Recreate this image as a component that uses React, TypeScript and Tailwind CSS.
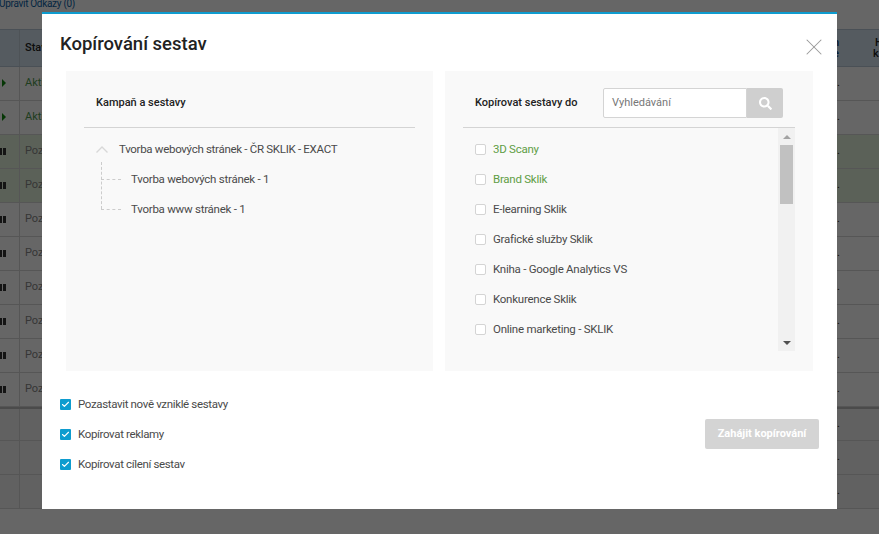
import React from 'react';
import { Check, X } from 'lucide-react';
import { FaSearch } from 'react-icons/fa';

const targets = [
    { name: '3D Scany', active: true },
    { name: 'Brand Sklik', active: true },
    { name: 'E-learning Sklik' },
    { name: 'Grafické služby Sklik' },
    { name: 'Kniha - Google Analytics VS' },
    { name: 'Konkurence Sklik' },
    { name: 'Online marketing - SKLIK' },
];

const rows = [
    { state: 'Aktivní', on: true },
    { state: 'Aktivní', on: true },
    { state: 'Pozastaveno', green: true },
    { state: 'Pozastaveno', green: true },
    { state: 'Pozastaveno' },
    { state: 'Pozastaveno' },
    { state: 'Pozastaveno' },
    { state: 'Pozastaveno' },
    { state: 'Pozastaveno' },
    { state: 'Pozastaveno' },
];

const options = ['Pozastavit nově vzniklé sestavy', 'Kopírovat reklamy', 'Kopírovat cílení sestav'];

function Background() {
    return (
        <div className="text-[11px] text-[#222]">
            <div className="h-[29px] overflow-hidden">
                <div className="-mt-[4px] -ml-px text-[10px] tracking-[-0.3px] leading-[16px] text-[#0b5fa5]">Upravit Odkazy (0)</div>
            </div>
            <div className="flex h-[38px] bg-[#d4e3f0] border-y border-[#b8c8d6]">
                <div className="w-5 border-r border-[#c4d0da]" />
                <div className="pl-[5px] flex items-center font-medium flex-1">Stav</div>
                <div className="w-[40px] flex flex-col justify-center leading-[11px] font-medium text-[#0b3f75]">
                    <div>n</div>
                    <div>e</div>
                </div>
                <div className="w-[6px] flex flex-col justify-center items-start leading-[11px] font-medium">
                    <div className="ml-[2px]">H</div>
                    <div>k</div>
                </div>
            </div>
            {rows.map((row, i) => (
                <div key={i} className={`flex h-[34px] border-b border-[#d6d6d6] ${row.green ? 'bg-[#e3f2dc]' : 'bg-white'}`}>
                    <div className="w-5 border-r border-[#d6d6d6] flex items-center">
                        {row.on ? (
                            <div className="ml-[2px] -mt-[2px] border-y-[4px] border-l-[4px] border-y-transparent border-l-[#108a10]" />
                        ) : (
                            <div className="flex gap-px">
                                <div className="w-[2px] h-[7px] bg-[#333]" />
                                <div className="w-[3px] h-[7px] bg-[#333]" />
                            </div>
                        )}
                    </div>
                    <div className={`pl-[5px] flex items-center flex-1 ${row.on ? 'text-[#4f9a4f]' : 'text-[#888]'}`}>{row.state}</div>
                    <div className="w-[42px] flex items-center">.</div>
                </div>
            ))}
            <div className="h-[2px] bg-[#bbb]" />
            {[32, 34, 34].map((height, i) => (
                <div key={i} className={`flex bg-[#f2f2f2] border-b border-[#d6d6d6] ${height === 32 ? 'h-[32px]' : 'h-[34px]'}`}>
                    <div className="w-5 border-r border-[#d6d6d6]" />
                    <div className="flex-1" />
                    <div className="w-[42px] flex items-center">.</div>
                </div>
            ))}
        </div>
    );
}

export default function App() {
    return (
        <div className="relative h-[534px] w-[879px] overflow-hidden bg-white font-['Roboto',sans-serif]">
            <Background />
            <div className="absolute inset-0 bg-black/60" />

            <div className="absolute left-[42px] top-[12px] w-[795px] h-[497px] bg-white border-t-2 border-[#0e9ccf] flex flex-col">
                <div className="h-[57px] px-[18px] flex justify-between relative">
                    <h1 className="mt-[18px] text-[18.5px] leading-[24px] font-medium text-[#222]">Kopírování sestav</h1>
                    <X className="absolute right-[9px] top-[19px] w-[28px] h-[28px] text-[#999]" strokeWidth={0.9} />
                </div>

                <div className="flex gap-3 pl-[24px] pr-[24px]">
                    <div className="w-[367px] h-[300px] bg-[#f9f9f9] px-[18px]">
                        <div className="h-[57px] pt-2 border-b border-[#d4d4d4] flex items-center pl-3 text-[11px] font-medium text-[#222]">
                            Kampaň a sestavy
                        </div>
                        <div className="mt-[6px] text-[11.5px] tracking-[-0.25px] text-[#4a4a4a]">
                            <div className="h-[30px] flex items-center">
                                <svg width="12" height="7" viewBox="0 0 12 7" className="ml-3 mr-[11px]" fill="none" stroke="#d8d8d8" strokeWidth="1.4"><path d="M0.5 6.5 6 1l5.5 5.5" /></svg>
                                <span className="mt-px tracking-[-0.3px]">Tvorba webových stránek - ČR SKLIK - EXACT</span>
                            </div>
                            <div className="relative h-[60px]">
                                <div className="absolute left-[17px] top-[-2px] h-[47px] border-l border-dashed border-[#ccc]" />
                                {['Tvorba webových stránek - 1', 'Tvorba www stránek - 1'].map(name => (
                                    <div key={name} className="h-[30px] flex items-center pl-[17px]">
                                        <div className="w-[20px] border-t border-dashed border-[#ccc]" />
                                        <span className="ml-[10px] mt-px">{name}</span>
                                    </div>
                                ))}
                            </div>
                        </div>
                    </div>

                    <div className="w-[368px] h-[300px] bg-[#f9f9f9] pl-[18px] pr-[18px]">
                        <div className="h-[57px] pt-2 border-b border-[#d4d4d4] flex items-center pl-3 text-[11px] font-medium text-[#222]">
                            <span className="w-[128px]">Kopírovat sestavy do</span>
                            <div className="flex h-[30px] w-[180px]">
                                <div className="flex-1 bg-white border border-[#d4d4d4] rounded-l-[2px] flex items-center pl-2 text-[11px] font-normal text-[#777]">Vyhledávání</div>
                                <div className="w-[36px] bg-[#cfcfcf] rounded-r-[2px] flex items-center justify-center">
                                    <FaSearch className="w-[13px] h-[13px] text-white" />
                                </div>
                            </div>
                        </div>
                        <div className="flex h-[223px] overflow-hidden">
                            <div className="flex-1 pt-[6px]">
                                {targets.map(t => (
                                    <div key={t.name} className={`h-[30px] flex items-center pl-3 text-[11.5px] tracking-[-0.25px] ${t.active ? 'text-[#5f9e45]' : 'text-[#4a4a4a]'}`}>
                                        <div className="w-[11px] h-[11px] bg-white border border-[#d4d4d4] rounded-[2px] mr-[7px]" />
                                        <span className="mt-px">{t.name}</span>
                                    </div>
                                ))}
                            </div>
                            <div className="w-[17px] bg-[#f1f1f1] flex flex-col items-center">
                                <div className="h-[17px] flex items-center"><div className="border-x-[4px] border-b-[4px] border-x-transparent border-b-[#a3a3a3]" /></div>
                                <div className="w-[13px] h-[59px] bg-[#c1c1c1]" />
                                <div className="mt-auto h-[17px] flex items-center"><div className="border-x-[4px] border-t-[4px] border-x-transparent border-t-[#505050]" /></div>
                            </div>
                        </div>
                    </div>
                </div>

                <div className="flex items-center justify-between pl-[18px] pr-[18px] mt-[18px]">
                    <div>
                        {options.map(o => (
                            <div key={o} className="h-[30px] flex items-center text-[11.5px] tracking-[-0.35px] text-[#4a4a4a]">
                                <div className="w-[11px] h-[11px] bg-[#0e9ccf] rounded-[1px] mr-[7px] flex items-center justify-center">
                                    <Check className="w-[9px] h-[9px] text-white" strokeWidth={3} />
                                </div>
                                <span className="mt-px">{o}</span>
                            </div>
                        ))}
                    </div>
                    <button className="w-[114px] h-[30px] bg-[#d4d4d4] rounded-[2px] text-white text-[11px] font-bold">Zahájit kopírování</button>
                </div>
            </div>
        </div>
    );
}
